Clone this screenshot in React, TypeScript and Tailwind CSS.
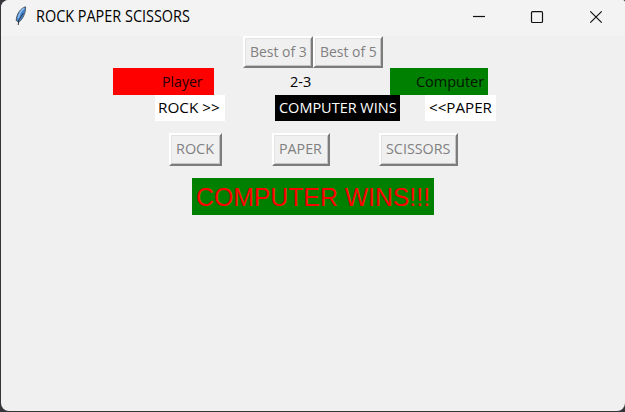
import type { ReactNode } from "react";

const raised =
  "flex items-center box-border border-2 border-t-white border-l-white border-r-[#7c7c7c] border-b-[#7c7c7c] bg-[#f0f0f0] text-[#808080] whitespace-nowrap shadow-[inset_1px_1px_0_#e3e3e3,inset_-1px_-1px_0_#c4c4c4]";

function TkButton({ size, stretch, children }: { size: string; stretch: string; children: ReactNode }) {
  return (
    <button disabled className={`${raised} ${size}`}>
      <Label stretch={stretch}>{children}</Label>
    </button>
  );
}

function Label({ stretch, children }: { stretch: string; children: ReactNode }) {
  return <span className={`inline-block origin-left whitespace-nowrap ${stretch}`}>{children}</span>;
}

function Feather() {
  return (
    <svg width="12" height="20" viewBox="0 0 12 20" className="block">
      <path d="M10.5 .8C6 2 1.500 7.500 1.200 14.500L3.800 16.300C7.500 13.500 11 7 10.500 .8Z" fill="#4285d2" stroke="#4a4d55" strokeWidth=".9" />
      <path d="M9.300 2.200C6 4.500 4 8 3.400 12.500" stroke="#8fbdf0" strokeWidth="1.500" fill="none" />
      <path d="M8.300 7L3.800 14L3.200 19" stroke="#2b3442" strokeWidth="1" fill="none" />
    </svg>
  );
}

export default function App() {
  return (
    <div className="h-[412px] w-[625px] overflow-hidden bg-[#35363a] pb-px pl-px font-['Open_Sans','Noto_Sans',sans-serif] text-[15px] leading-[20px] text-black">
      <div className="h-[411px] w-[624px] overflow-hidden rounded-tl-[8px] rounded-tr-[3px] rounded-b-[8px] bg-[#f0f0f0]">
        <header className="flex h-9 bg-[#f3f3f3] pl-[14px]">
          <div className="mt-[6px] w-[21px]"><Feather /></div>
          <h1 className="mt-[6px] w-[422px] whitespace-nowrap text-[16px]">
            <Label stretch="scale-x-[0.902]">ROCK PAPER SCISSORS</Label>
          </h1>
          <svg width="140" height="36" viewBox="458 0 140 36" fill="none" stroke="#111" strokeWidth="1.200" className="overflow-visible">
            <path d="M473 16.500H485" />
            <rect x="531.500" y="11.700" width="11" height="10.800" rx="1" />
            <path d="M590.300 11.300L601.700 22.700M601.700 11.300L590.300 22.700" />
          </svg>
        </header>

        <div className="flex pl-[242px]">
          <TkButton size="h-8 w-[70px] pb-[2px] pl-[5px]" stretch="scale-x-[0.93]">Best of 3</TkButton>
          <TkButton size="h-8 w-[70px] pb-[2px] pl-[5px]" stretch="scale-x-[0.93]">Best of 5</TkButton>
        </div>

        <div className="flex h-[27px] items-center pl-[112px]">
          <div className="flex h-[27px] w-[101px] items-center bg-[#ff0000] pb-[2px] pl-[49px] text-[#200000]">
            <Label stretch="scale-x-[0.94]">Player</Label>
          </div>
          <div className="w-[176px] pb-[2px] pl-[76px]"><Label stretch="scale-x-[0.97]">2-3</Label></div>
          <div className="flex h-[27px] w-[98px] items-center bg-[#008000] pb-[2px] pl-[26px] text-[#001400]">
            <Label stretch="scale-x-[0.965]">Computer</Label>
          </div>
        </div>

        <div className="flex h-[26px] pl-[154px]">
          <div className="flex h-[26px] w-[70px] items-center bg-white pb-[2px] pl-[3px]">
            <Label stretch="scale-x-[1.02]">ROCK &gt;&gt;</Label>
          </div>
          <div className="ml-[50px] flex h-[26px] w-[125px] items-center bg-black pb-[2px] pl-1 text-white">
            <Label stretch="scale-x-[0.965]">COMPUTER WINS</Label>
          </div>
          <div className="ml-[25px] flex h-[26px] w-[71px] items-center bg-white pb-[2px] pl-1">
            <Label stretch="scale-x-[1.01]">&lt;&lt;PAPER</Label>
          </div>
        </div>

        <div className="mt-3 flex pl-[168px]">
          <TkButton size="h-[33px] w-[53px] pb-[3px] pl-[5px]" stretch="scale-x-[0.96]">ROCK</TkButton>
          <div className="ml-[50px]">
            <TkButton size="h-[33px] w-[58px] pb-[3px] pl-[5px]" stretch="scale-x-[0.95]">PAPER</TkButton>
          </div>
          <div className="ml-[49px]">
            <TkButton size="h-[33px] w-[79px] pb-[3px] pl-[5px]" stretch="scale-x-[0.955]">SCISSORS</TkButton>
          </div>
        </div>

        <div className="ml-[191px] mt-3 flex h-[37px] w-[242px] items-center bg-[#008000] pl-1 font-['Liberation_Sans',Arial,sans-serif] text-[26px] text-[#ff0000]">
          <Label stretch="scale-x-[0.953]">COMPUTER WINS!!!</Label>
        </div>
      </div>
    </div>
  );
}
